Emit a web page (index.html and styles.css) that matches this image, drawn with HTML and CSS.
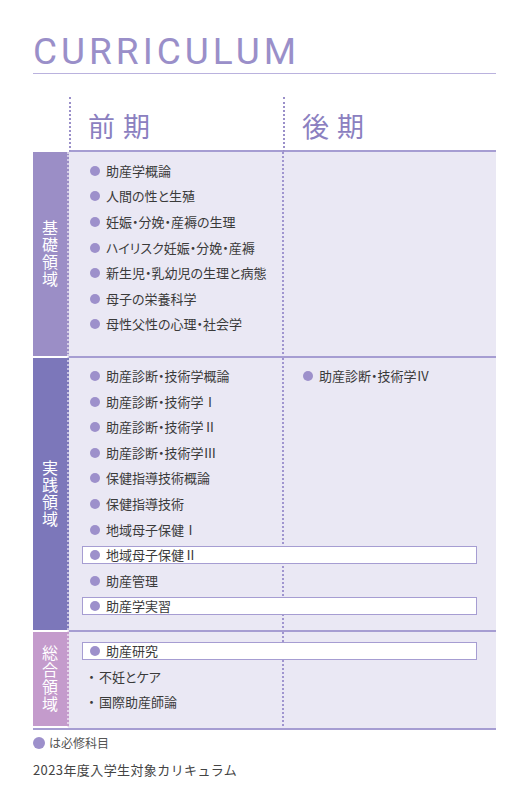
FILE: index.html
```html
<!DOCTYPE html>
<html lang="ja">
<head>
<meta charset="utf-8">
<title>CURRICULUM</title>
<link rel="stylesheet" href="styles.css">
</head>
<body>
<div class="page">
  <h1 class="title">CURRICULUM</h1>
  <div class="table">
    <div class="thead">
      <div class="th-blank"></div>
      <div class="th">前期</div>
      <div class="th">後期</div>
    </div>

    <section class="sec sec-basic">
      <div class="band band-basic"><span class="band-label">基礎領域</span></div>
      <div class="cells">
        <div class="item"><i class="dot"></i>助産学概論</div>
        <div class="item"><i class="dot"></i>人間の性と生殖</div>
        <div class="item"><i class="dot"></i>妊娠・分娩・産褥の生理</div>
        <div class="item"><i class="dot"></i>ハイリスク妊娠・分娩・産褥</div>
        <div class="item"><i class="dot"></i>新生児・乳幼児の生理と病態</div>
        <div class="item"><i class="dot"></i>母子の栄養科学</div>
        <div class="item"><i class="dot"></i>母性父性の心理・社会学</div>
      </div>
    </section>

    <section class="sec sec-practice">
      <div class="band band-practice"><span class="band-label">実践領域</span></div>
      <div class="cells">
        <div class="item item-right"><i class="dot"></i>助産診断・技術学Ⅳ</div>
        <div class="item"><i class="dot"></i>助産診断・技術学概論</div>
        <div class="item"><i class="dot"></i>助産診断・技術学Ⅰ</div>
        <div class="item"><i class="dot"></i>助産診断・技術学Ⅱ</div>
        <div class="item"><i class="dot"></i>助産診断・技術学Ⅲ</div>
        <div class="item"><i class="dot"></i>保健指導技術概論</div>
        <div class="item"><i class="dot"></i>保健指導技術</div>
        <div class="item"><i class="dot"></i>地域母子保健Ⅰ</div>
        <div class="item box"><i class="dot"></i>地域母子保健Ⅱ</div>
        <div class="item"><i class="dot"></i>助産管理</div>
        <div class="item box"><i class="dot"></i>助産学実習</div>
      </div>
    </section>

    <section class="sec sec-general">
      <div class="band band-general"><span class="band-label">総合領域</span></div>
      <div class="cells">
        <div class="item box"><i class="dot"></i>助産研究</div>
        <div class="item plain"><span class="mid">・</span>不妊とケア</div>
        <div class="item plain"><span class="mid">・</span>国際助産師論</div>
      </div>
    </section>
  </div>

  <div class="note"><i class="dot dot-note"></i>は必修科目</div>
  <p class="year">2023年度入学生対象カリキュラム</p>
</div>
</body>
</html>
```

FILE: styles.css
```css
body {
  margin: 0;
  background: #ffffff;
  font-family: "Noto Sans CJK JP", "Noto Sans", sans-serif;
  color: #3a3a3a;
}

.page {
  width: 463px;
  padding: 33px 0 0 33px;
}

.title {
  margin: 0;
  font-family: Roboto, "Liberation Sans", sans-serif;
  font-weight: 400;
  font-size: 37px;
  line-height: 37px;
  letter-spacing: 4px;
  color: #9a8fc9;
  padding-bottom: 3px;
  border-bottom: 1px solid #bab2de;
}

.table {
  margin-top: 23px;
  border-bottom: 2px solid #a69dd2;
}

.thead {
  display: grid;
  grid-template-columns: 36px 214px 213px;
}

.th {
  border-left: 2px dotted #9a8fc9;
  border-bottom: 2px solid #a69dd2;
  padding: 16px 0 11px 17px;
  font-size: 27px;
  line-height: 26px;
  letter-spacing: 8px;
  color: #8b80c0;
}

.sec {
  display: grid;
  grid-template-columns: 36px 427px;
}

.band {
  display: flex;
  align-items: center;
  justify-content: center;
  border-right: 2px dotted rgba(255, 255, 255, 0.55);
  color: #ffffff;
}

.band-basic { background: #9b8ec6; }
.band-practice { background: #7c77ba; }
.band-general { background: #c49bcc; border-bottom: 2px solid #ffffff; }

.sec + .sec .band { border-top: 2px solid #ffffff; }
.sec + .sec .cells { border-top: 2px solid #a69dd2; }

.band-label {
  writing-mode: vertical-rl;
  text-orientation: upright;
  font-size: 16px;
  line-height: 1;
  letter-spacing: 1px;
}

.cells {
  display: grid;
  grid-template-columns: 214px 213px;
  grid-auto-rows: 25.6px;
  align-items: center;
  background-color: #eae8f4;
  background-image: linear-gradient(#a095cf 50%, transparent 50%);
  background-size: 2px 4px;
  background-repeat: repeat-y;
  background-position: 213px 0;
}

.sec-basic .cells { padding: 6px 0 18.8px; }
.sec-practice .cells { padding: 5.2px 0 10.8px; }
.sec-general .cells { padding: 6.5px 0 12.7px; }

.item {
  grid-column: 1;
  display: flex;
  align-items: center;
  padding-left: 21px;
  font-size: 13px;
  line-height: 16px;
  font-feature-settings: "palt";
  white-space: nowrap;
}

.item-right {
  grid-column: 2;
  grid-row: 1;
  padding-left: 20px;
}

.dot {
  flex: none;
  width: 10px;
  height: 10px;
  border-radius: 50%;
  background: #9d90cb;
  margin-right: 6px;
}

.item.box {
  grid-column: 1 / -1;
  box-sizing: border-box;
  height: 18px;
  margin: 0 19px 0 13px;
  padding-left: 7px;
  border: 1px solid #a69dd2;
  background: #ffffff;
}

.item.plain {
  padding-left: 16px;
}

.mid {
  display: inline-block;
  width: 13px;
  text-align: center;
  font-feature-settings: normal;
  margin-right: 1px;
}

.note {
  display: flex;
  align-items: center;
  height: 18px;
  margin-top: 4px;
  font-size: 12px;
  color: #555555;
}

.dot-note {
  width: 12px;
  height: 12px;
  margin-right: 4px;
}

.year {
  margin: 8px 0 0;
  font-size: 13px;
  line-height: 20px;
  letter-spacing: 0.4px;
  color: #444444;
}
```
